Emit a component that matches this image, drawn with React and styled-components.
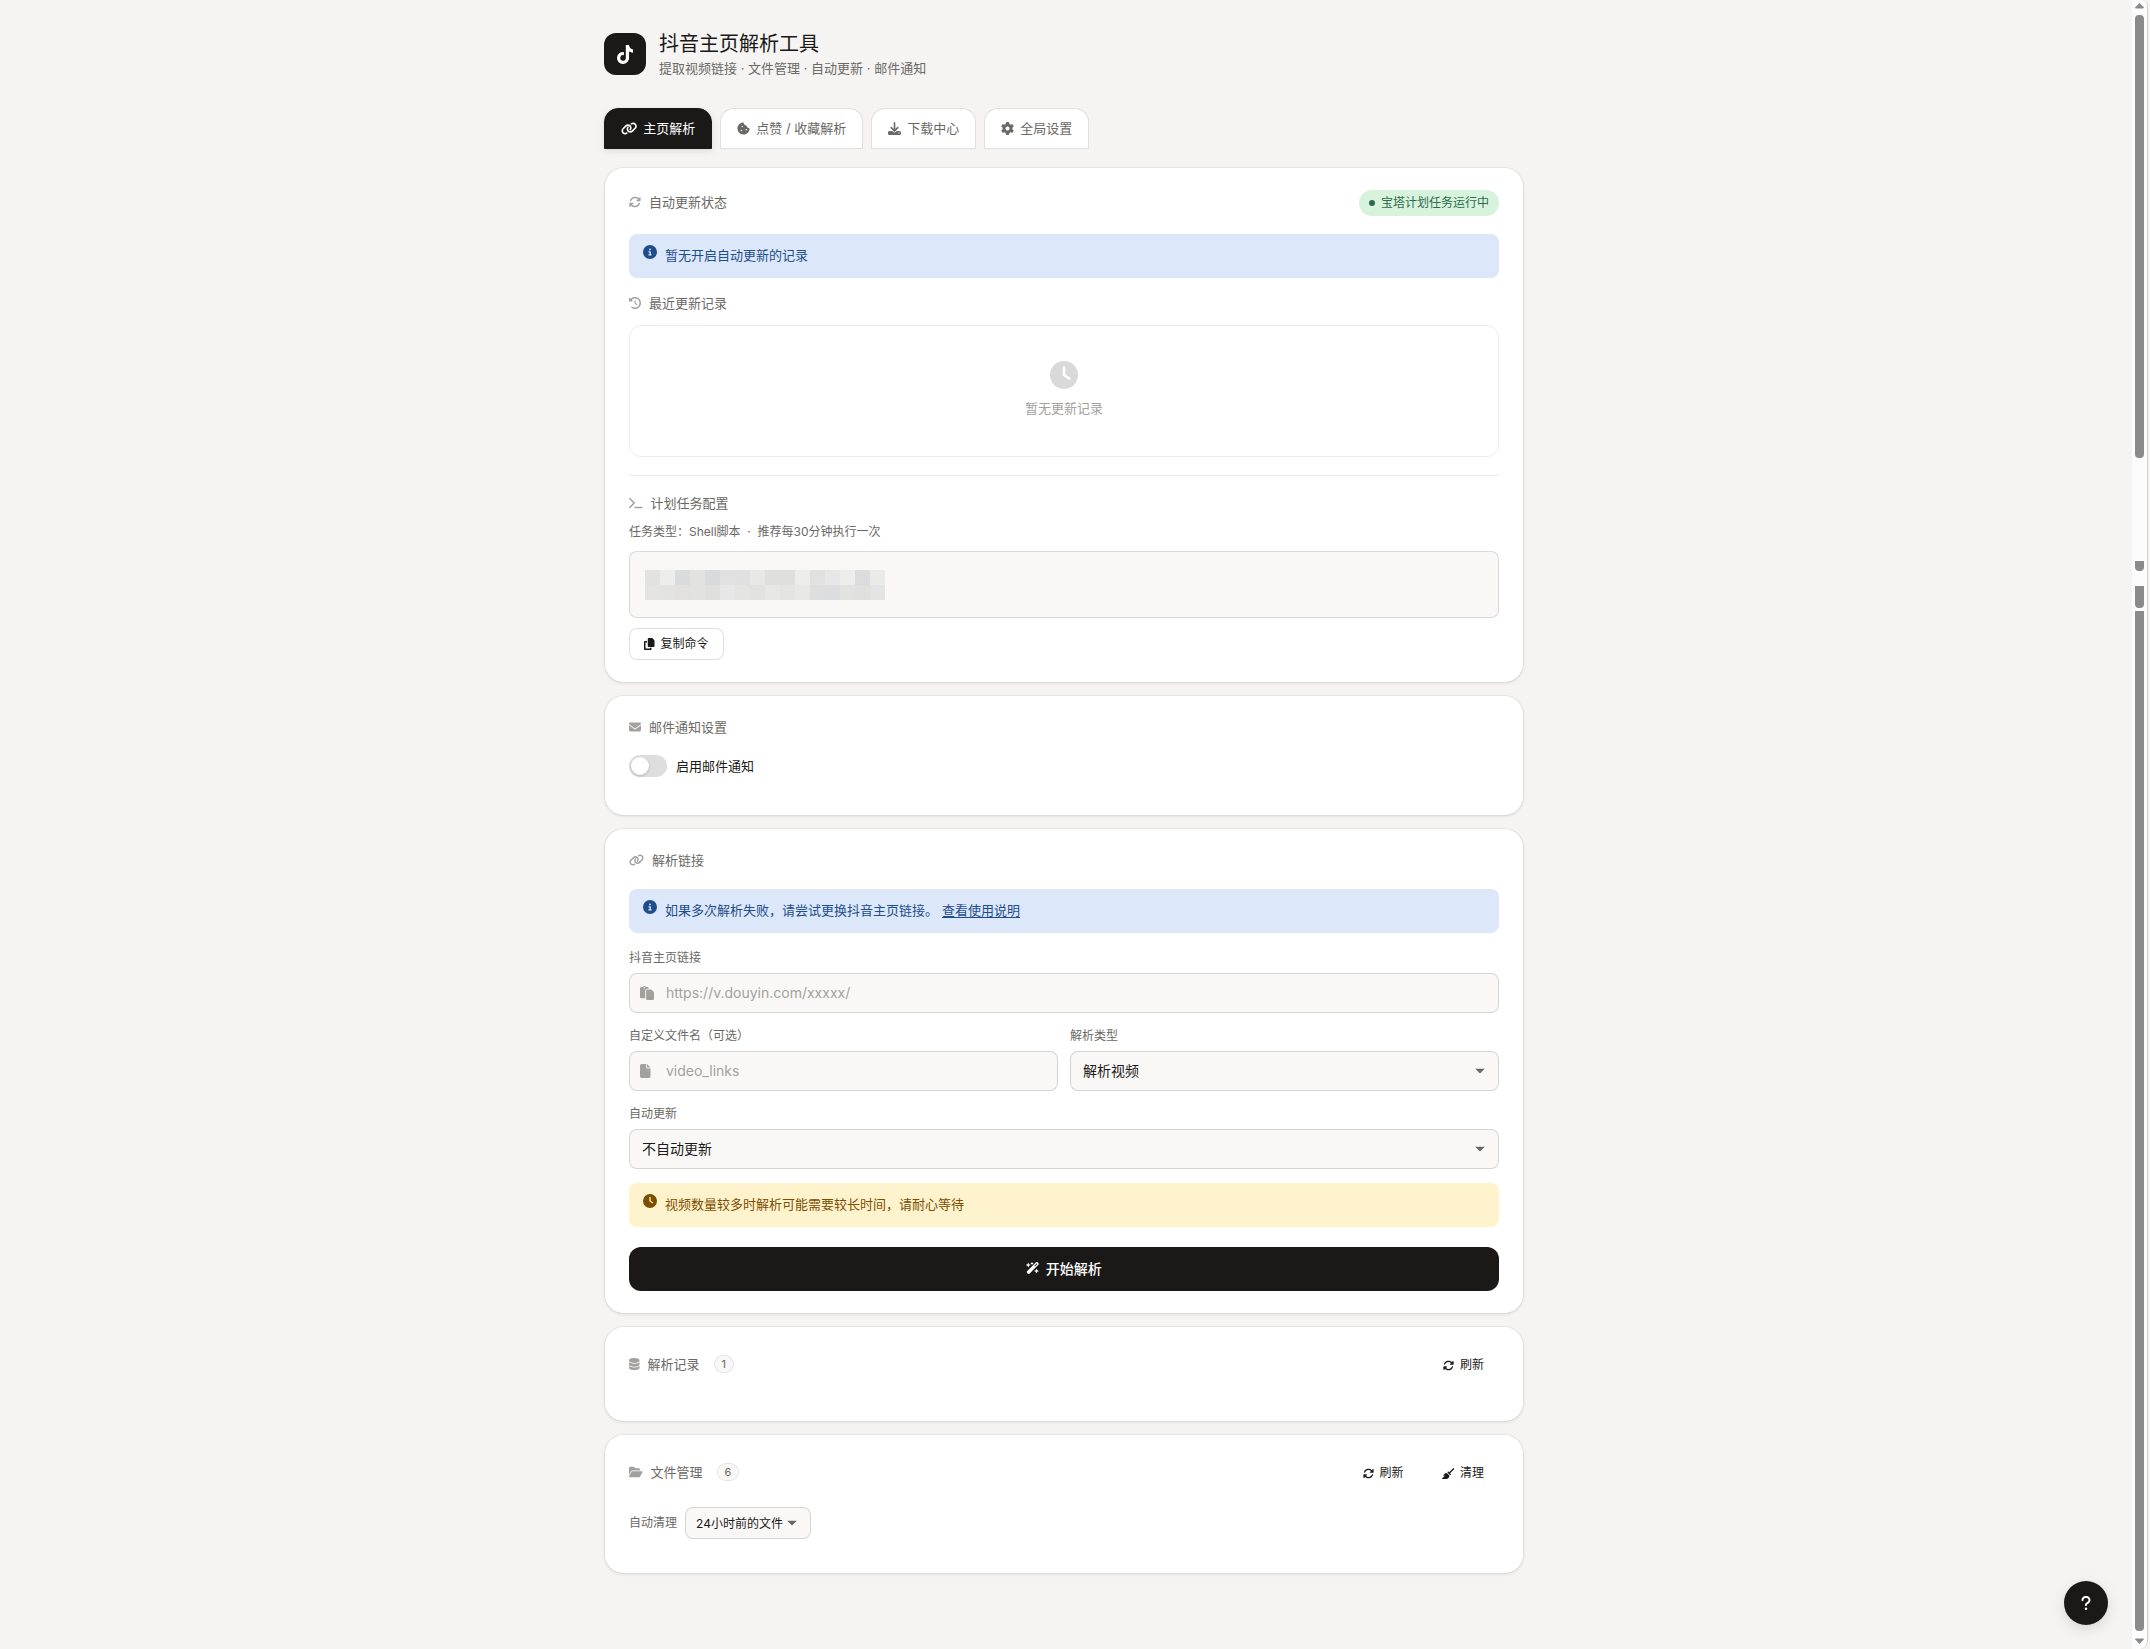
import React, { useState } from "react";
import styled, { createGlobalStyle } from "styled-components";
import {
  FaTiktok,
  FaLink,
  FaCookieBite,
  FaDownload,
  FaGear,
  FaArrowsRotate,
  FaCircleInfo,
  FaClockRotateLeft,
  FaClock,
  FaTerminal,
  FaCopy,
  FaEnvelope,
  FaPaste,
  FaFile,
  FaWandMagicSparkles,
  FaDatabase,
  FaFolderOpen,
  FaBroom,
  FaQuestion,
} from "react-icons/fa6";

const ink = "#1a1917";
const muted = "#6b6966";
const faint = "#a3a19e";
const line = "rgba(0, 0, 0, 0.12)";
const field = "#f9f8f6";

const GlobalStyle = createGlobalStyle`
  *, *::before, *::after { box-sizing: border-box; }
  body {
    margin: 0;
    background: #f5f4f2;
    color: ${ink};
    font-family: Inter, "Noto Sans CJK SC", sans-serif;
    font-size: 13px;
    line-height: 20px;
  }
  h1, h2, p { margin: 0; font-weight: 400; }
  button, input, select { font-family: inherit; margin: 0; }
  svg { flex: none; display: block; }
`;

const Shell = styled.div`
  display: flex;
  min-height: 100vh;
`;

const Page = styled.div`
  flex: 1;
  min-width: 0;
  padding: 30px 24px 64px;
`;

const Container = styled.div`
  max-width: 920px;
  margin: 0 auto;
`;

const Header = styled.header`
  display: flex;
  align-items: center;
  gap: 13px;
  margin-bottom: 30px;
`;

const Logo = styled.div`
  width: 42px;
  height: 42px;
  border-radius: 12px;
  background: ${ink};
  color: #fff;
  display: grid;
  place-items: center;
`;

const Title = styled.h1`
  font-size: 20px;
  line-height: 28px;
`;

const Subtitle = styled.p`
  color: ${muted};
`;

const Tabs = styled.nav`
  display: flex;
  gap: 8px;
  margin-bottom: 18px;
`;

const Tab = styled.button`
  display: flex;
  align-items: center;
  gap: 6px;
  padding: 9px 16px;
  border: 1px solid ${(p) => (p.$active ? ink : line)};
  border-radius: 14px 14px 0 0;
  background: ${(p) => (p.$active ? ink : "#fff")};
  color: ${(p) => (p.$active ? "#fff" : muted)};
  box-shadow: ${(p) => (p.$active ? "0 2px 6px rgba(0, 0, 0, 0.1)" : "none")};
  font-size: 13px;
  line-height: 21px;
  cursor: pointer;
`;

const Stack = styled.main`
  display: flex;
  flex-direction: column;
  gap: 12px;
`;

const Card = styled.section`
  padding: 22px 24px;
  border: 1px solid rgba(0, 0, 0, 0.04);
  border-radius: 20px;
  background: #fff;
  background-clip: padding-box;
  box-shadow: 0 1px 3px rgba(0, 0, 0, 0.07);
`;

const CardHead = styled.div`
  display: flex;
  align-items: center;
  justify-content: space-between;
  margin-bottom: 18px;
`;

const Heading = styled.h2`
  display: flex;
  align-items: center;
  gap: 8px;
  padding-bottom: 2px;
  font-size: 13px;
  line-height: 18px;
  color: ${muted};
  margin-bottom: ${(p) => p.$mb || 0}px;

  svg { color: ${faint}; }
`;

const StatusBadge = styled.span`
  display: flex;
  align-items: center;
  gap: 6px;
  padding: 4px 10px;
  border-radius: 13px;
  background: #d8f3dc;
  color: #2d6a4f;
  font-size: 12px;
  line-height: 18px;

  &::before {
    content: "";
    width: 6px;
    height: 6px;
    border-radius: 50%;
    background: currentColor;
  }
`;

const Alert = styled.div`
  display: flex;
  align-items: flex-start;
  gap: 8px;
  padding: 11px 14px 13px;
  margin-bottom: ${(p) => p.$mb || 16}px;
  border-radius: 8px;
  background: ${(p) => (p.$warn ? "#fff3cd" : "#dce8fa")};
  color: ${(p) => (p.$warn ? "#7d4e00" : "#1e4d8c")};

  a {
    color: inherit;
    margin-left: 4px;
    text-underline-offset: 2px;
  }
`;

const Empty = styled.div`
  display: flex;
  flex-direction: column;
  align-items: center;
  gap: 9px;
  padding: 35px 0 38px;
  border: 1px solid rgba(0, 0, 0, 0.07);
  border-radius: 12px;
  color: ${faint};

  svg { color: #d9d9d9; }
`;

const Divider = styled.hr`
  height: 1px;
  margin: 18px 0;
  border: 0;
  background: rgba(0, 0, 0, 0.08);
`;

const Hint = styled.p`
  font-size: 12px;
  line-height: 18px;
  color: ${muted};
  margin-bottom: 10px;
`;

const CodeBox = styled.div`
  padding: 18px 15px 17px;
  margin-bottom: 10px;
  border: 1px solid ${line};
  border-radius: 8px;
  background: ${field};
`;

const Mosaic = styled.div`
  display: grid;
  grid-template-columns: repeat(16, 15px);
  grid-auto-rows: 15px;
`;

const Cell = styled.span`
  background: ${(p) => p.$tone};
`;

const SmallButton = styled.button`
  display: flex;
  align-items: center;
  gap: 6px;
  height: 32px;
  padding: 0 14px;
  border: 1px solid ${(p) => (p.$ghost ? "transparent" : line)};
  border-radius: 8px;
  background: ${(p) => (p.$ghost ? "transparent" : "#fff")};
  color: ${ink};
  font-size: 12px;
  line-height: 18px;
  cursor: pointer;
`;

const SwitchRow = styled.label`
  display: flex;
  align-items: center;
  gap: 9px;
  height: 22px;
  margin-bottom: 16px;
  cursor: pointer;
`;

const Switch = styled.input`
  appearance: none;
  width: 38px;
  height: 22px;
  padding: 2px;
  border-radius: 11px;
  background: #dededf;
  cursor: pointer;

  &::before {
    content: "";
    display: block;
    width: 18px;
    height: 18px;
    border-radius: 50%;
    background: #fff;
    box-shadow: 0 1px 3px rgba(0, 0, 0, 0.2);
  }
  &:checked { background: ${ink}; }
  &:checked::before { margin-left: 16px; }
`;

const Columns = styled.div`
  display: grid;
  grid-template-columns: 1fr 1fr;
  gap: 12px;
`;

const Field = styled.div`
  margin-bottom: 14px;
`;

const Label = styled.label`
  display: block;
  margin-bottom: 6px;
  font-size: 12px;
  line-height: 18px;
  color: ${muted};
`;

const Control = styled.div`
  position: relative;
`;

const LeadIcon = styled.span`
  position: absolute;
  left: 11px;
  top: 13px;
  color: ${faint};
`;

const CaretSlot = styled.span`
  position: absolute;
  right: 14px;
  top: 50%;
  transform: translateY(-50%);
  color: ${muted};
  pointer-events: none;
`;

const TextInput = styled.input`
  display: block;
  width: 100%;
  height: 40px;
  padding: 0 12px 2px 36px;
  border: 1px solid rgba(0, 0, 0, 0.14);
  border-radius: 8px;
  background: ${field};
  color: ${ink};
  font-size: 14px;

  &::placeholder { color: ${faint}; opacity: 1; }
`;

const Select = styled.select`
  appearance: none;
  display: block;
  width: ${(p) => (p.$small ? "126px" : "100%")};
  height: ${(p) => (p.$small ? 32 : 40)}px;
  padding: ${(p) => (p.$small ? "0 24px 0 10px" : "0 32px 2px 12px")};
  border: 1px solid rgba(0, 0, 0, 0.14);
  border-radius: 8px;
  background: ${field};
  color: ${ink};
  font-size: ${(p) => (p.$small ? 12 : 14)}px;
`;

const PrimaryButton = styled.button`
  display: flex;
  align-items: center;
  justify-content: center;
  gap: 6px;
  width: 100%;
  height: 44px;
  padding: 0 0 2px;
  border: 0;
  border-radius: 12px;
  background: ${ink};
  color: #fff;
  font-size: 14px;
  font-weight: 500;
  cursor: pointer;
`;

const Count = styled.span`
  min-width: 20px;
  padding: 0 7px;
  margin-left: 6px;
  border: 1px solid rgba(0, 0, 0, 0.08);
  border-radius: 9px;
  background: ${field};
  font-size: 11px;
  line-height: 16px;
  text-align: center;
`;

const Actions = styled.div`
  display: flex;
  gap: 8px;
`;

const CleanRow = styled.div`
  display: flex;
  align-items: center;
  gap: 8px;
  margin-bottom: 12px;
`;

const InlineLabel = styled.label`
  font-size: 12px;
  line-height: 18px;
  color: ${muted};
`;

const HelpButton = styled.button`
  position: fixed;
  right: 42px;
  bottom: 24px;
  width: 44px;
  height: 44px;
  padding: 0;
  border: 0;
  border-radius: 50%;
  background: ${ink};
  color: #fff;
  display: grid;
  place-items: center;
  box-shadow: 0 4px 14px rgba(0, 0, 0, 0.12);
  cursor: pointer;
`;

const Rail = styled.div`
  width: 16px;
  margin: 0 2px 0 4px;
  padding: 3px 3px 5px;
  border-right: 1px solid #d2d2d2;
  border-radius: 0 6px 8px 0;
  background: #fcfcfc;
  display: flex;
  flex-direction: column;
  align-items: center;
  color: #8b8b8b;
`;

const Thumb = styled.div`
  width: 9px;
  flex: ${(p) => (p.$size ? `0 0 ${p.$size}px` : "1")};
  margin-top: ${(p) => p.$gap}px;
  margin-bottom: ${(p) => p.$after || 0}px;
  border-radius: ${(p) => p.$radius || "0 0 4px 4px"};
  background: currentColor;
`;

const mosaicTones = [
  "#e2e2e1", "#ededec", "#dadbdc", "#e2e2e1", "#d9dadb", "#e1e1e1", "#e0e0e0", "#e9e8e8",
  "#dfdfde", "#dfdfde", "#ededec", "#e1e1e0", "#e6e7e6", "#ededec", "#dbdcdd", "#eaeae9",
  "#e4e4e4", "#e3e3e2", "#e2e1df", "#e2e2e1", "#dfdfde", "#e6e7e6", "#e4e4e3", "#e2e2e1",
  "#e6e7e6", "#e4e4e3", "#e8e8e7", "#dededf", "#dcdddf", "#e2e2e1", "#e0e0df", "#e4e4e4",
];

const tabs = [
  { label: "主页解析", icon: FaLink },
  { label: "点赞 / 收藏解析", icon: FaCookieBite },
  { label: "下载中心", icon: FaDownload },
  { label: "全局设置", icon: FaGear },
];

/* Icons are sized by height; their width follows the drawing's own ratio. */
function Icon({ as: Glyph, size = 13 }) {
  return <Glyph size="auto" style={{ height: size, width: "auto" }} aria-hidden="true" />;
}

function Caret() {
  return (
    <CaretSlot>
      <svg width="10" height="5" viewBox="0 0 10 5" aria-hidden="true">
        <path d="M0 0H10L5 5Z" fill="currentColor" />
      </svg>
    </CaretSlot>
  );
}

function Arrow({ up }) {
  return (
    <svg width="9" height="6" viewBox="0 0 9 6" aria-hidden="true">
      <path d={up ? "M4.5 0 L9 4.6 Q9 5.4 8 5.4 H1 Q0 5.4 0 4.6Z" : "M4.5 6 L9 1.2 Q9 .4 8 .4 H1 Q0 .4 0 1.2Z"} fill="currentColor" />
    </svg>
  );
}

export default function App() {
  const [active, setActive] = useState(0);

  return (
    <>
      <GlobalStyle />
      <Shell>
        <Page>
          <Container>
            <Header>
              <Logo><Icon as={FaTiktok} size={19} /></Logo>
              <div>
                <Title>抖音主页解析工具</Title>
                <Subtitle>提取视频链接 · 文件管理 · 自动更新 · 邮件通知</Subtitle>
              </div>
            </Header>

            <Tabs>
              {tabs.map((tab, i) => (
                <Tab key={tab.label} type="button" $active={i === active} onClick={() => setActive(i)}>
                  <Icon as={tab.icon} />
                  {tab.label}
                </Tab>
              ))}
            </Tabs>

            <Stack>
              <Card>
                <CardHead>
                  <Heading><Icon as={FaArrowsRotate} size={12} />自动更新状态</Heading>
                  <StatusBadge>宝塔计划任务运行中</StatusBadge>
                </CardHead>
                <Alert><Icon as={FaCircleInfo} size={14} />暂无开启自动更新的记录</Alert>
                <Heading $mb={11}><Icon as={FaClockRotateLeft} size={12} />最近更新记录</Heading>
                <Empty>
                  <Icon as={FaClock} size={28} />
                  暂无更新记录
                </Empty>
                <Divider />
                <Heading $mb={9}><Icon as={FaTerminal} size={12} />计划任务配置</Heading>
                <Hint>任务类型：Shell脚本 &nbsp;·&nbsp; 推荐每30分钟执行一次</Hint>
                <CodeBox>
                  <Mosaic>
                    {mosaicTones.map((tone, i) => <Cell key={i} $tone={tone} />)}
                  </Mosaic>
                </CodeBox>
                <SmallButton type="button"><Icon as={FaCopy} size={12} />复制命令</SmallButton>
              </Card>

              <Card>
                <Heading $mb={17}><Icon as={FaEnvelope} size={12} />邮件通知设置</Heading>
                <SwitchRow>
                  <Switch type="checkbox" />
                  启用邮件通知
                </SwitchRow>
              </Card>

              <Card>
                <Heading $mb={18}><Icon as={FaLink} size={12} />解析链接</Heading>
                <Alert>
                  <Icon as={FaCircleInfo} size={14} />
                  <span>如果多次解析失败，请尝试更换抖音主页链接。<a href="#help">查看使用说明</a></span>
                </Alert>
                <Field>
                  <Label htmlFor="home-url">抖音主页链接</Label>
                  <Control>
                    <LeadIcon><Icon as={FaPaste} size={14} /></LeadIcon>
                    <TextInput id="home-url" type="text" placeholder="https://v.douyin.com/xxxxx/" />
                  </Control>
                </Field>
                <Columns>
                  <Field>
                    <Label htmlFor="file-name">自定义文件名（可选）</Label>
                    <Control>
                      <LeadIcon><Icon as={FaFile} size={14} /></LeadIcon>
                      <TextInput id="file-name" type="text" placeholder="video_links" />
                    </Control>
                  </Field>
                  <Field>
                    <Label htmlFor="kind">解析类型</Label>
                    <Control>
                      <Select id="kind"><option>解析视频</option></Select>
                      <Caret />
                    </Control>
                  </Field>
                </Columns>
                <Field>
                  <Label htmlFor="auto-update">自动更新</Label>
                  <Control>
                    <Select id="auto-update"><option>不自动更新</option></Select>
                    <Caret />
                  </Control>
                </Field>
                <Alert $warn $mb={20}><Icon as={FaClock} size={14} />视频数量较多时解析可能需要较长时间，请耐心等待</Alert>
                <PrimaryButton type="button"><Icon as={FaWandMagicSparkles} size={12} />开始解析</PrimaryButton>
              </Card>

              <Card>
                <CardHead>
                  <Heading><Icon as={FaDatabase} size={12} />解析记录 <Count>1</Count></Heading>
                  <Actions>
                    <SmallButton type="button" $ghost><Icon as={FaArrowsRotate} size={11} />刷新</SmallButton>
                  </Actions>
                </CardHead>
              </Card>

              <Card>
                <CardHead>
                  <Heading><Icon as={FaFolderOpen} size={12} />文件管理 <Count>6</Count></Heading>
                  <Actions>
                    <SmallButton type="button" $ghost><Icon as={FaArrowsRotate} size={11} />刷新</SmallButton>
                    <SmallButton type="button" $ghost><Icon as={FaBroom} size={11} />清理</SmallButton>
                  </Actions>
                </CardHead>
                <CleanRow>
                  <InlineLabel htmlFor="clean">自动清理</InlineLabel>
                  <Control>
                    <Select id="clean" $small><option>24小时前的文件</option></Select>
                    <Caret />
                  </Control>
                </CleanRow>
              </Card>
            </Stack>
          </Container>
        </Page>

        <Rail aria-hidden="true">
          <Arrow up />
          <Thumb $gap={6} $size={443} $radius="4px" />
          <Thumb $gap={103} $size={10} />
          <Thumb $gap={15} $size={22} />
          <Thumb $gap={3} $after={7} />
          <Arrow />
        </Rail>
      </Shell>

      <HelpButton type="button" aria-label="帮助"><Icon as={FaQuestion} size={16} /></HelpButton>
    </>
  );
}
